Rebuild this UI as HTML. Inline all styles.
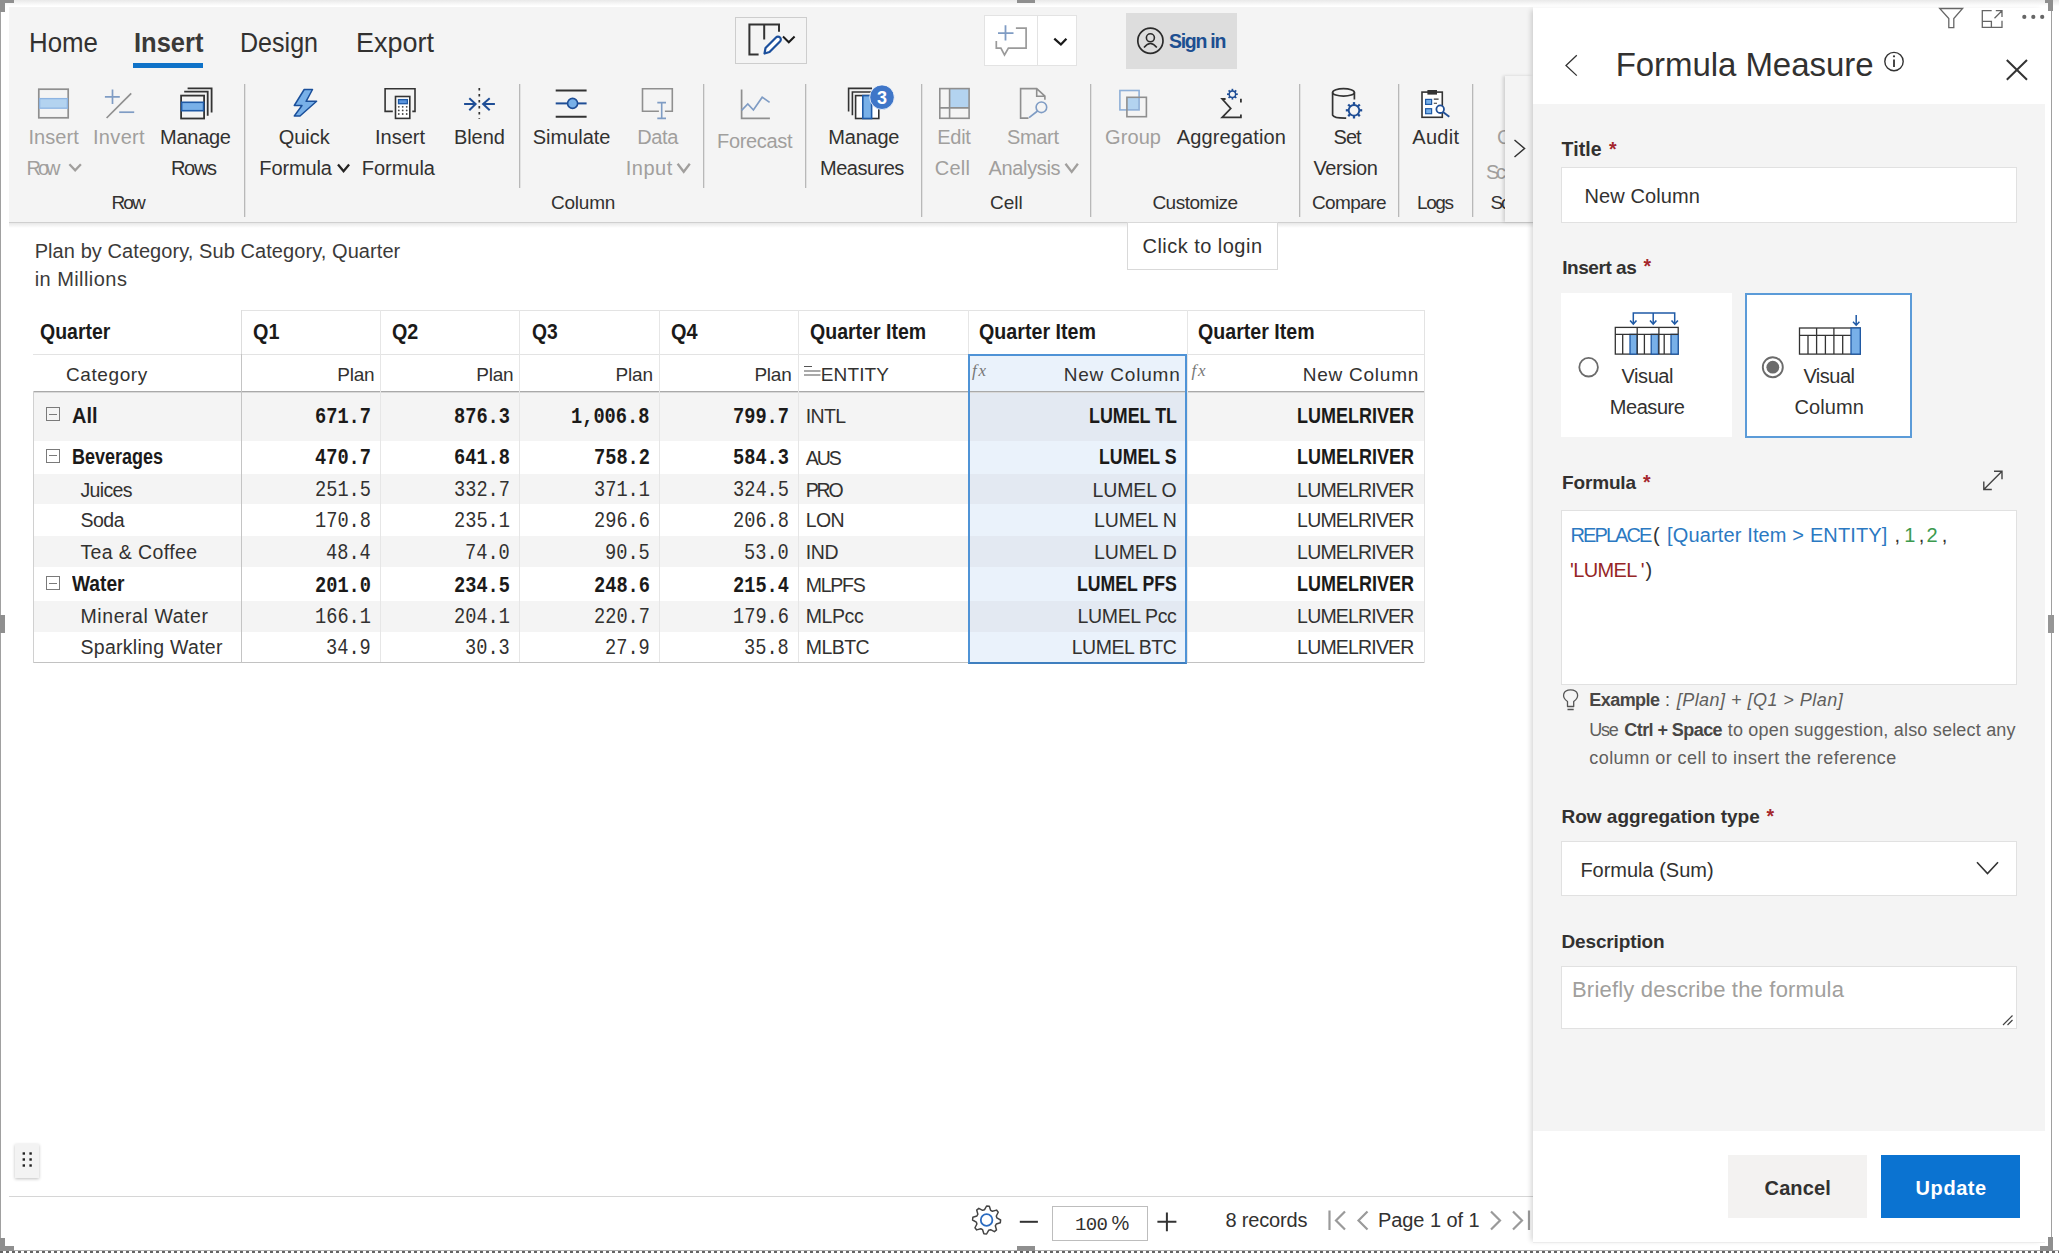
<!DOCTYPE html>
<html><head><meta charset="utf-8"><title>Formula Measure</title>
<style>
html,body{margin:0;padding:0;}
body{width:2059px;height:1253px;position:relative;overflow:hidden;background:#fff;font-family:"Liberation Sans",sans-serif;}
.t{position:absolute;white-space:nowrap;}
.b{position:absolute;box-sizing:border-box;}
</style></head><body>
<div class="b" style="left:0px;top:0px;width:2059px;height:6px;background:linear-gradient(#e9e9e9,#ffffff);"></div>
<div class="b" style="left:0px;top:0px;width:1px;height:1253px;background:#a0a0a0;"></div>
<div class="b" style="left:2051px;top:0px;width:1px;height:1253px;background:#a0a0a0;"></div>
<div class="b" style="left:0px;top:1250px;width:2059px;height:1px;background:#b0b0b0;"></div>
<div class="b" style="left:0px;top:1251px;width:2059px;height:2px;background:repeating-linear-gradient(90deg,#666 0 3px,#fff 3px 6px);"></div>
<div class="b" style="left:0px;top:0px;width:14px;height:3px;background:#8f8f8f;"></div>
<div class="b" style="left:0px;top:0px;width:5px;height:12px;background:#8f8f8f;"></div>
<div class="b" style="left:0px;top:1238px;width:5px;height:13px;background:#8f8f8f;"></div>
<div class="b" style="left:0px;top:1246px;width:14px;height:5px;background:#8f8f8f;"></div>
<div class="b" style="left:2040px;top:1246px;width:13px;height:5px;background:#8f8f8f;"></div>
<div class="b" style="left:2048px;top:1237px;width:5px;height:14px;background:#8f8f8f;"></div>
<div class="b" style="left:2045px;top:0px;width:8px;height:3px;background:#8f8f8f;"></div>
<div class="b" style="left:2048px;top:0px;width:5px;height:11px;background:#8f8f8f;"></div>
<div class="b" style="left:1017px;top:0px;width:18px;height:3px;background:#8f8f8f;"></div>
<div class="b" style="left:1017px;top:1246px;width:18px;height:5px;background:#8f8f8f;"></div>
<div class="b" style="left:0px;top:615px;width:5px;height:18px;background:#8f8f8f;"></div>
<div class="b" style="left:2048px;top:615px;width:6px;height:18px;background:#969696;"></div>
<div class="b" style="left:9px;top:7px;width:1524px;height:215px;background:#f4f4f4;"></div>
<div class="b" style="left:9px;top:222px;width:1524px;height:1px;background:#cfcfcf;"></div>
<div class="b" style="left:9px;top:223px;width:1524px;height:5px;background:linear-gradient(rgba(0,0,0,0.09),rgba(0,0,0,0));"></div>
<div class="t" style="left:28.70px;top:29.29px;font-size:28px;line-height:28px;font-family:'Liberation Sans', sans-serif;font-weight:normal;font-style:normal;letter-spacing:0.000px;color:#323130;transform:scaleX(0.9238);transform-origin:0 0;">Home</div>
<div class="t" style="left:133.50px;top:29.29px;font-size:28px;line-height:28px;font-family:'Liberation Sans', sans-serif;font-weight:bold;font-style:normal;letter-spacing:0.000px;color:#3a3938;transform:scaleX(0.9115);transform-origin:0 0;">Insert</div>
<div class="t" style="left:239.80px;top:29.29px;font-size:28px;line-height:28px;font-family:'Liberation Sans', sans-serif;font-weight:normal;font-style:normal;letter-spacing:0.000px;color:#323130;transform:scaleX(0.8949);transform-origin:0 0;">Design</div>
<div class="t" style="left:356.40px;top:29.29px;font-size:28px;line-height:28px;font-family:'Liberation Sans', sans-serif;font-weight:normal;font-style:normal;letter-spacing:0.000px;color:#323130;transform:scaleX(0.9639);transform-origin:0 0;">Export</div>
<div class="b" style="left:133px;top:63px;width:70px;height:4.5px;background:#0f72c8;"></div>
<div class="b" style="left:735px;top:17px;width:72px;height:47px;border:1px solid #cdcdcd;"></div>
<div class="b" style="left:984px;top:15px;width:93px;height:51px;background:#fff;border:1px solid #e3e3e3;"></div>
<div class="b" style="left:1037px;top:16px;width:1px;height:49px;background:#e3e3e3;"></div>
<div class="b" style="left:1126px;top:13px;width:111px;height:56px;background:#dddddd;"></div>
<div class="t" style="left:1168.90px;top:31.99px;font-size:19.5px;line-height:19.5px;font-family:'Liberation Sans', sans-serif;font-weight:bold;font-style:normal;letter-spacing:-1.248px;color:#1d4f91;">Sign in</div>
<div class="b" style="left:244px;top:84px;width:1px;height:133px;background:#b8b8b8;"></div>
<div class="b" style="left:245px;top:84px;width:1px;height:133px;background:#e2e2e2;"></div>
<div class="b" style="left:519px;top:84px;width:1px;height:104px;background:#b8b8b8;"></div>
<div class="b" style="left:520px;top:84px;width:1px;height:104px;background:#e2e2e2;"></div>
<div class="b" style="left:703px;top:84px;width:1px;height:104px;background:#b8b8b8;"></div>
<div class="b" style="left:704px;top:84px;width:1px;height:104px;background:#e2e2e2;"></div>
<div class="b" style="left:805px;top:84px;width:1px;height:104px;background:#b8b8b8;"></div>
<div class="b" style="left:806px;top:84px;width:1px;height:104px;background:#e2e2e2;"></div>
<div class="b" style="left:921px;top:84px;width:1px;height:133px;background:#b8b8b8;"></div>
<div class="b" style="left:922px;top:84px;width:1px;height:133px;background:#e2e2e2;"></div>
<div class="b" style="left:1090px;top:84px;width:1px;height:133px;background:#b8b8b8;"></div>
<div class="b" style="left:1091px;top:84px;width:1px;height:133px;background:#e2e2e2;"></div>
<div class="b" style="left:1299px;top:84px;width:1px;height:133px;background:#b8b8b8;"></div>
<div class="b" style="left:1300px;top:84px;width:1px;height:133px;background:#e2e2e2;"></div>
<div class="b" style="left:1398px;top:84px;width:1px;height:133px;background:#b8b8b8;"></div>
<div class="b" style="left:1399px;top:84px;width:1px;height:133px;background:#e2e2e2;"></div>
<div class="b" style="left:1472px;top:84px;width:1px;height:133px;background:#b8b8b8;"></div>
<div class="b" style="left:1473px;top:84px;width:1px;height:133px;background:#e2e2e2;"></div>
<div class="t" style="left:28.40px;top:127.27px;font-size:20px;line-height:20px;font-family:'Liberation Sans', sans-serif;font-weight:normal;font-style:normal;letter-spacing:0.056px;color:#a19f9d;">Insert</div>
<div class="t" style="left:26.50px;top:158.07px;font-size:20px;line-height:20px;font-family:'Liberation Sans', sans-serif;font-weight:normal;font-style:normal;letter-spacing:-3.005px;color:#a19f9d;">Row</div>
<div class="t" style="left:93.00px;top:127.27px;font-size:20px;line-height:20px;font-family:'Liberation Sans', sans-serif;font-weight:normal;font-style:normal;letter-spacing:0.316px;color:#a19f9d;">Invert</div>
<div class="t" style="left:160.00px;top:127.27px;font-size:20px;line-height:20px;font-family:'Liberation Sans', sans-serif;font-weight:normal;font-style:normal;letter-spacing:-0.256px;color:#323130;">Manage</div>
<div class="t" style="left:171.00px;top:158.07px;font-size:20px;line-height:20px;font-family:'Liberation Sans', sans-serif;font-weight:normal;font-style:normal;letter-spacing:-1.337px;color:#323130;">Rows</div>
<div class="t" style="left:278.70px;top:127.27px;font-size:20px;line-height:20px;font-family:'Liberation Sans', sans-serif;font-weight:normal;font-style:normal;letter-spacing:-0.031px;color:#323130;">Quick</div>
<div class="t" style="left:259.30px;top:158.07px;font-size:20px;line-height:20px;font-family:'Liberation Sans', sans-serif;font-weight:normal;font-style:normal;letter-spacing:-0.109px;color:#323130;">Formula</div>
<div class="t" style="left:375.00px;top:127.27px;font-size:20px;line-height:20px;font-family:'Liberation Sans', sans-serif;font-weight:normal;font-style:normal;letter-spacing:-0.004px;color:#323130;">Insert</div>
<div class="t" style="left:361.80px;top:158.07px;font-size:20px;line-height:20px;font-family:'Liberation Sans', sans-serif;font-weight:normal;font-style:normal;letter-spacing:-0.026px;color:#323130;">Formula</div>
<div class="t" style="left:454.00px;top:127.27px;font-size:20px;line-height:20px;font-family:'Liberation Sans', sans-serif;font-weight:normal;font-style:normal;letter-spacing:-0.089px;color:#323130;">Blend</div>
<div class="t" style="left:532.80px;top:127.27px;font-size:20px;line-height:20px;font-family:'Liberation Sans', sans-serif;font-weight:normal;font-style:normal;letter-spacing:-0.017px;color:#323130;">Simulate</div>
<div class="t" style="left:637.20px;top:127.27px;font-size:20px;line-height:20px;font-family:'Liberation Sans', sans-serif;font-weight:normal;font-style:normal;letter-spacing:-0.316px;color:#a19f9d;">Data</div>
<div class="t" style="left:625.80px;top:158.07px;font-size:20px;line-height:20px;font-family:'Liberation Sans', sans-serif;font-weight:normal;font-style:normal;letter-spacing:0.504px;color:#a19f9d;">Input</div>
<div class="t" style="left:717.00px;top:131.07px;font-size:20px;line-height:20px;font-family:'Liberation Sans', sans-serif;font-weight:normal;font-style:normal;letter-spacing:-0.315px;color:#a19f9d;">Forecast</div>
<div class="t" style="left:828.30px;top:127.27px;font-size:20px;line-height:20px;font-family:'Liberation Sans', sans-serif;font-weight:normal;font-style:normal;letter-spacing:-0.216px;color:#323130;">Manage</div>
<div class="t" style="left:820.00px;top:158.07px;font-size:20px;line-height:20px;font-family:'Liberation Sans', sans-serif;font-weight:normal;font-style:normal;letter-spacing:-0.502px;color:#323130;">Measures</div>
<div class="t" style="left:937.30px;top:127.27px;font-size:20px;line-height:20px;font-family:'Liberation Sans', sans-serif;font-weight:normal;font-style:normal;letter-spacing:-0.288px;color:#a19f9d;">Edit</div>
<div class="t" style="left:934.80px;top:158.07px;font-size:20px;line-height:20px;font-family:'Liberation Sans', sans-serif;font-weight:normal;font-style:normal;letter-spacing:0.248px;color:#a19f9d;">Cell</div>
<div class="t" style="left:1007.00px;top:127.27px;font-size:20px;line-height:20px;font-family:'Liberation Sans', sans-serif;font-weight:normal;font-style:normal;letter-spacing:-0.336px;color:#a19f9d;">Smart</div>
<div class="t" style="left:988.60px;top:158.07px;font-size:20px;line-height:20px;font-family:'Liberation Sans', sans-serif;font-weight:normal;font-style:normal;letter-spacing:-0.354px;color:#a19f9d;">Analysis</div>
<div class="t" style="left:1105.00px;top:127.27px;font-size:20px;line-height:20px;font-family:'Liberation Sans', sans-serif;font-weight:normal;font-style:normal;letter-spacing:0.103px;color:#a19f9d;">Group</div>
<div class="t" style="left:1176.70px;top:127.27px;font-size:20px;line-height:20px;font-family:'Liberation Sans', sans-serif;font-weight:normal;font-style:normal;letter-spacing:0.143px;color:#323130;">Aggregation</div>
<div class="t" style="left:1333.60px;top:127.27px;font-size:20px;line-height:20px;font-family:'Liberation Sans', sans-serif;font-weight:normal;font-style:normal;letter-spacing:-1.010px;color:#323130;">Set</div>
<div class="t" style="left:1313.40px;top:158.07px;font-size:20px;line-height:20px;font-family:'Liberation Sans', sans-serif;font-weight:normal;font-style:normal;letter-spacing:-0.352px;color:#323130;">Version</div>
<div class="t" style="left:1412.30px;top:127.27px;font-size:20px;line-height:20px;font-family:'Liberation Sans', sans-serif;font-weight:normal;font-style:normal;letter-spacing:0.278px;color:#323130;">Audit</div>
<div class="t" style="left:1497.00px;top:127.27px;font-size:20px;line-height:20px;font-family:'Liberation Sans', sans-serif;font-weight:normal;font-style:normal;letter-spacing:0.000px;color:#a19f9d;">C</div>
<div class="t" style="left:1486.00px;top:161.57px;font-size:20px;line-height:20px;font-family:'Liberation Sans', sans-serif;font-weight:normal;font-style:normal;letter-spacing:-3.341px;color:#a19f9d;">Sc</div>
<div class="t" style="left:111.60px;top:192.51px;font-size:19px;line-height:19px;font-family:'Liberation Sans', sans-serif;font-weight:normal;font-style:normal;letter-spacing:-1.955px;color:#323130;">Row</div>
<div class="t" style="left:551.00px;top:192.51px;font-size:19px;line-height:19px;font-family:'Liberation Sans', sans-serif;font-weight:normal;font-style:normal;letter-spacing:-0.234px;color:#323130;">Column</div>
<div class="t" style="left:990.00px;top:192.51px;font-size:19px;line-height:19px;font-family:'Liberation Sans', sans-serif;font-weight:normal;font-style:normal;letter-spacing:0.022px;color:#323130;">Cell</div>
<div class="t" style="left:1152.40px;top:192.51px;font-size:19px;line-height:19px;font-family:'Liberation Sans', sans-serif;font-weight:normal;font-style:normal;letter-spacing:-0.494px;color:#323130;">Customize</div>
<div class="t" style="left:1311.90px;top:192.51px;font-size:19px;line-height:19px;font-family:'Liberation Sans', sans-serif;font-weight:normal;font-style:normal;letter-spacing:-0.591px;color:#323130;">Compare</div>
<div class="t" style="left:1417.00px;top:192.51px;font-size:19px;line-height:19px;font-family:'Liberation Sans', sans-serif;font-weight:normal;font-style:normal;letter-spacing:-1.401px;color:#323130;">Logs</div>
<div class="t" style="left:1490.60px;top:192.51px;font-size:19px;line-height:19px;font-family:'Liberation Sans', sans-serif;font-weight:normal;font-style:normal;letter-spacing:-2.173px;color:#323130;">Sc</div>
<div class="b" style="left:1505px;top:76px;width:28px;height:146px;background:#f4f4f4;box-shadow:-2px 0 3px rgba(0,0,0,0.15);"></div>
<div class="b" style="left:1127px;top:222px;width:151px;height:48px;background:#fff;border:1px solid #d9d9d9;"></div>
<div class="t" style="left:1142.50px;top:236.37px;font-size:20px;line-height:20px;font-family:'Liberation Sans', sans-serif;font-weight:normal;font-style:normal;letter-spacing:0.471px;color:#323130;">Click to login</div>
<svg class="b" style="left:0;top:0" width="1540" height="240" viewBox="0 0 1540 240" fill="none"><path d="M758.6 54.5 H749.4 V24.6 H779 V31.8 M764.2 24.6 V39.6" stroke="#333333" stroke-width="2" fill="none" /><path d="M764.5 53.5 L765.5 48 L776 37.5 A2.5 2.5 0 0 1 780 41.5 L769.5 52 Z" stroke="#1b4f9c" stroke-width="2.2" fill="#fff" stroke-linejoin="round"/><path d="M783 36.5 L788.8 42.3 L794.6 36.5" stroke="#1a1a1a" stroke-width="2" fill="none" /><path d="M1005.5 25.3 V40.6 M998 33.1 H1013.5" stroke="#7f9cc4" stroke-width="1.8" fill="none" /><path d="M1015.9 28.2 H1026.1 V48.1 H1008.4 L1004.5 54.9 L1000.9 48.1 H996.3 V41.1" stroke="#9a9a9a" stroke-width="1.7" fill="none" /><path d="M1054.3 38.7 L1060.9 44.5 L1066.4 38.7" stroke="#1a1a1a" stroke-width="2.3" fill="none" /><circle cx="1150.4" cy="40.7" r="12.6" stroke="#2b2b2b" stroke-width="1.7"/><circle cx="1150.4" cy="37.8" r="4" stroke="#2b2b2b" stroke-width="1.6"/><path d="M1144 47.4 Q1150.4 39.5 1156.8 47.4" stroke="#2b2b2b" stroke-width="1.6" fill="none" /><rect x="38.8" y="89.2" width="29.4" height="28.6" stroke="#8f8f8f" stroke-width="1.7" fill="none"/><rect x="39.6" y="98.6" width="27.8" height="9.6" fill="#b3d3f0" stroke="#8db4e2" stroke-width="1.3"/><path d="M112.5 89.5 V104 M104.9 96.8 H119.8" stroke="#7f9cc4" stroke-width="1.7" fill="none" /><path d="M106.6 118 L131.2 93.4" stroke="#8f8f8f" stroke-width="1.7" fill="none" /><path d="M119.2 112.2 H134.2" stroke="#7f9cc4" stroke-width="1.7" fill="none" /><path d="M187.6 88.4 H211.6 V112.4" stroke="#333333" stroke-width="1.8" fill="none" /><path d="M184.2 91.7 H207.7 V115.8" stroke="#333333" stroke-width="1.8" fill="none" /><rect x="181.1" y="95.6" width="23" height="22.9" stroke="#333333" stroke-width="1.8" fill="none"/><rect x="181.6" y="102.3" width="22" height="8.4" fill="#78b0e8" stroke="#1f5aa6" stroke-width="1.6"/><path d="M304.2 89.5 H312.5 L306.1 101.3 H316.6 L300 116 H294.3 L302 105.5 H294.3 Z" stroke="#1a4f9a" stroke-width="1.5" fill="#78b0e8" stroke-linejoin="round"/><path d="M392.8 111.4 H385.1 V88.7 H415 V111.4 H412.3" stroke="#333333" stroke-width="1.6" fill="none" /><rect x="395.5" y="96.5" width="14.3" height="21.9" stroke="#333333" stroke-width="1.6" fill="#fff"/><rect x="398.5" y="99.6" width="8.9" height="4.1" fill="#5a94dd" stroke="#1f5aa6" stroke-width="1.3"/><circle cx="398.8" cy="106.8" r="0.9" fill="#444"/><circle cx="398.8" cy="110.4" r="0.9" fill="#444"/><circle cx="398.8" cy="114" r="0.9" fill="#444"/><circle cx="402.7" cy="106.8" r="0.9" fill="#444"/><circle cx="402.7" cy="110.4" r="0.9" fill="#444"/><circle cx="402.7" cy="114" r="0.9" fill="#444"/><circle cx="406.7" cy="106.8" r="0.9" fill="#444"/><circle cx="406.7" cy="110.4" r="0.9" fill="#444"/><circle cx="406.7" cy="114" r="0.9" fill="#444"/><path d="M479.3 88 V118.7" stroke="#333333" stroke-width="1.7" fill="none" stroke-dasharray="2.5 3.5"/><path d="M464.1 104 H475.6 M469.3 98.3 L475.6 104 L469.3 110.3" stroke="#1f4e96" stroke-width="2" fill="none" /><path d="M494.9 104 H483.1 M489.7 98.3 L483.1 104 L489.7 110.3" stroke="#1f4e96" stroke-width="2" fill="none" /><path d="M555.7 90.6 H586.6 M555.7 116.8 H586.6" stroke="#333333" stroke-width="2" fill="none" /><path d="M555.7 103.4 H586.6" stroke="#1f4e96" stroke-width="2" fill="none" /><circle cx="572.6" cy="103.4" r="5" fill="#78b0e8" stroke="#1f4e96" stroke-width="1.6"/><path d="M658.9 111.3 H642.5 V88.7 H672.3 V111.3 H664.9" stroke="#8f8f8f" stroke-width="1.6" fill="none" /><path d="M661.7 102.6 V118.4 M657.3 102.6 H666 M657.3 118.4 H666" stroke="#7f9cc4" stroke-width="1.6" fill="none" /><path d="M741.6 89.5 V118.3 H769.9" stroke="#8f8f8f" stroke-width="1.7" fill="none" /><path d="M741.6 110.3 L747.8 104 L753.4 110 L762.2 97.2 L769.6 102.4" stroke="#7f9cc4" stroke-width="1.7" fill="none" /><path d="M848.6 111.6 V88.4 H872" stroke="#333333" stroke-width="1.6" fill="none" /><path d="M852.4 115.3 V92 H874" stroke="#333333" stroke-width="1.6" fill="none" /><rect x="855.6" y="95.6" width="23.2" height="22.9" stroke="#333333" stroke-width="1.6" fill="#fff"/><rect x="862.8" y="95.6" width="8.8" height="22.9" fill="#78b0e8" stroke="#1f5aa6" stroke-width="1.6"/><circle cx="882" cy="97.2" r="12.3" fill="#3f76c8" stroke="#fff" stroke-width="0.8"/><text x="882" y="103.8" font-family="Liberation Sans" font-weight="bold" font-size="18" fill="#fff" text-anchor="middle">3</text><rect x="949.6" y="88.6" width="19.5" height="19.3" fill="#b3d3f0"/><rect x="939.8" y="88.6" width="29.3" height="29.7" stroke="#8f8f8f" stroke-width="1.6" fill="none"/><path d="M949.6 88.6 V118.3 M939.8 107.9 H969.1" stroke="#8f8f8f" stroke-width="1.6" fill="none" /><path d="M1028.5 118.1 H1020.6 V88.6 H1036.7 L1044.9 96.2 V99.7 M1036.7 88.6 V96.2 H1044.9" stroke="#8f8f8f" stroke-width="1.6" fill="none" /><circle cx="1041.4" cy="107.3" r="5.3" stroke="#7f9cc4" stroke-width="1.6"/><path d="M1037.5 111 L1029.1 117.7" stroke="#7f9cc4" stroke-width="1.7" fill="none" /><rect x="1126.9" y="97.3" width="12.2" height="12.6" fill="#b3d3f0"/><rect x="1119.9" y="90.5" width="19.2" height="19.4" stroke="#8fb0d8" stroke-width="1.6" fill="none"/><rect x="1126.9" y="97.3" width="19.5" height="19.4" stroke="#8f8f8f" stroke-width="1.6" fill="none"/><path d="M1225.6 99 H1222.2 L1230.7 108.5 L1222.2 117.4 H1240.9 V114.5 M1240.9 98.7 V102.4" stroke="#333333" stroke-width="1.8" fill="none" /><circle cx="1232.4" cy="94.2" r="3.2" stroke="#1f4e96" stroke-width="1.4" fill="#f4f4f4"/><line x1="1235.60" y1="94.20" x2="1237.80" y2="94.20" stroke="#1f4e96" stroke-width="1.68"/><line x1="1234.66" y1="96.46" x2="1236.22" y2="98.02" stroke="#1f4e96" stroke-width="1.68"/><line x1="1232.40" y1="97.40" x2="1232.40" y2="99.60" stroke="#1f4e96" stroke-width="1.68"/><line x1="1230.14" y1="96.46" x2="1228.58" y2="98.02" stroke="#1f4e96" stroke-width="1.68"/><line x1="1229.20" y1="94.20" x2="1227.00" y2="94.20" stroke="#1f4e96" stroke-width="1.68"/><line x1="1230.14" y1="91.94" x2="1228.58" y2="90.38" stroke="#1f4e96" stroke-width="1.68"/><line x1="1232.40" y1="91.00" x2="1232.40" y2="88.80" stroke="#1f4e96" stroke-width="1.68"/><line x1="1234.66" y1="91.94" x2="1236.22" y2="90.38" stroke="#1f4e96" stroke-width="1.68"/><path d="M1332.6 92.4 V115.1 Q1334 118.3 1346.2 118.1 M1354.4 92.4 V99.6" stroke="#333333" stroke-width="1.7" fill="none" /><ellipse cx="1343.5" cy="92.4" rx="10.9" ry="3.7" stroke="#333333" stroke-width="1.7"/><circle cx="1354" cy="110.3" r="5.3" stroke="#1f4e96" stroke-width="1.9" fill="#f4f4f4"/><line x1="1359.30" y1="110.30" x2="1362.20" y2="110.30" stroke="#1f4e96" stroke-width="2.28"/><line x1="1357.75" y1="114.05" x2="1359.80" y2="116.10" stroke="#1f4e96" stroke-width="2.28"/><line x1="1354.00" y1="115.60" x2="1354.00" y2="118.50" stroke="#1f4e96" stroke-width="2.28"/><line x1="1350.25" y1="114.05" x2="1348.20" y2="116.10" stroke="#1f4e96" stroke-width="2.28"/><line x1="1348.70" y1="110.30" x2="1345.80" y2="110.30" stroke="#1f4e96" stroke-width="2.28"/><line x1="1350.25" y1="106.55" x2="1348.20" y2="104.50" stroke="#1f4e96" stroke-width="2.28"/><line x1="1354.00" y1="105.00" x2="1354.00" y2="102.10" stroke="#1f4e96" stroke-width="2.28"/><line x1="1357.75" y1="106.55" x2="1359.80" y2="104.50" stroke="#1f4e96" stroke-width="2.28"/><rect x="1422" y="92.1" width="20.3" height="25.2" stroke="#333333" stroke-width="1.6" fill="#fff"/><rect x="1427.4" y="90" width="9.6" height="4.6" fill="#333333"/><rect x="1425.6" y="99.4" width="6" height="5" fill="#78b0e8" stroke="#1f5aa6" stroke-width="1.2"/><rect x="1425.6" y="108.7" width="6" height="5" fill="#78b0e8" stroke="#1f5aa6" stroke-width="1.2"/><path d="M1433.8 99.1 H1438.6 M1433.8 103.2 H1437" stroke="#333333" stroke-width="1.1" fill="none" /><circle cx="1440.2" cy="109.2" r="3.8" stroke="#1f4e96" stroke-width="1.8" fill="#fff"/><path d="M1443 112 L1449.3 116.7" stroke="#1f4e96" stroke-width="1.9" fill="none" /><path d="M69.39999999999999 164.3 L75.15 170.4 L80.9 164.3" stroke="#a19f9d" stroke-width="2.3"/><path d="M338.0 164.5 L343.54999999999995 171.20000000000002 L349.09999999999997 164.5" stroke="#252423" stroke-width="2.3"/><path d="M677.5999999999999 163.7 L683.7 171.8 L689.8000000000001 163.7" stroke="#a19f9d" stroke-width="2.3"/><path d="M1065.5 163.7 L1071.7 171.9 L1077.9 163.7" stroke="#a19f9d" stroke-width="2.3"/><path d="M1514.5 140 L1524.5 148.5 L1514.5 157" stroke="#333" stroke-width="1.5" fill="none" /></svg>
<div class="t" style="left:34.70px;top:240.77px;font-size:20px;line-height:20px;font-family:'Liberation Sans', sans-serif;font-weight:normal;font-style:normal;letter-spacing:0.074px;color:#3b3a39;">Plan by Category, Sub Category, Quarter</div>
<div class="t" style="left:34.70px;top:269.07px;font-size:20px;line-height:20px;font-family:'Liberation Sans', sans-serif;font-weight:normal;font-style:normal;letter-spacing:0.439px;color:#3b3a39;">in Millions</div>
<div class="b" style="left:34px;top:392px;width:1390px;height:49px;background:#f4f4f4;"></div>
<div class="b" style="left:968px;top:392px;width:219px;height:49px;background:#e3e9f2;"></div>
<div class="b" style="left:34px;top:441px;width:1390px;height:33px;background:#ffffff;"></div>
<div class="b" style="left:968px;top:441px;width:219px;height:33px;background:#eaf2fb;"></div>
<div class="b" style="left:34px;top:474px;width:1390px;height:30px;background:#f4f4f4;"></div>
<div class="b" style="left:968px;top:474px;width:219px;height:30px;background:#e3e9f2;"></div>
<div class="b" style="left:34px;top:504px;width:1390px;height:32px;background:#ffffff;"></div>
<div class="b" style="left:968px;top:504px;width:219px;height:32px;background:#eaf2fb;"></div>
<div class="b" style="left:34px;top:536px;width:1390px;height:31px;background:#f4f4f4;"></div>
<div class="b" style="left:968px;top:536px;width:219px;height:31px;background:#e3e9f2;"></div>
<div class="b" style="left:34px;top:567px;width:1390px;height:34px;background:#ffffff;"></div>
<div class="b" style="left:968px;top:567px;width:219px;height:34px;background:#eaf2fb;"></div>
<div class="b" style="left:34px;top:601px;width:1390px;height:31px;background:#f4f4f4;"></div>
<div class="b" style="left:968px;top:601px;width:219px;height:31px;background:#e3e9f2;"></div>
<div class="b" style="left:34px;top:632px;width:1390px;height:30px;background:#ffffff;"></div>
<div class="b" style="left:968px;top:632px;width:219px;height:30px;background:#eaf2fb;"></div>
<div class="b" style="left:968px;top:354px;width:219px;height:38px;background:#eaf2fb;"></div>
<div class="b" style="left:241px;top:310px;width:1184px;height:1px;background:#e3e3e3;"></div>
<div class="b" style="left:33px;top:354px;width:1392px;height:1px;background:#e3e3e3;"></div>
<div class="b" style="left:33px;top:391px;width:1392px;height:1px;background:#a9a9a9;"></div>
<div class="b" style="left:33px;top:392px;width:1392px;height:1px;background:#d9d9d9;"></div>
<div class="b" style="left:33px;top:662px;width:1392px;height:1px;background:#c2c2c2;"></div>
<div class="b" style="left:33px;top:391px;width:1px;height:272px;background:#d0d0d0;"></div>
<div class="b" style="left:1424px;top:310px;width:1px;height:353px;background:#e3e3e3;"></div>
<div class="b" style="left:241px;top:310px;width:1px;height:44px;background:#dddddd;"></div>
<div class="b" style="left:241px;top:354px;width:1px;height:309px;background:#c4c4c4;"></div>
<div class="b" style="left:380px;top:310px;width:1px;height:352px;background:#e6e6e6;"></div>
<div class="b" style="left:519px;top:310px;width:1px;height:352px;background:#e6e6e6;"></div>
<div class="b" style="left:659px;top:310px;width:1px;height:352px;background:#e6e6e6;"></div>
<div class="b" style="left:798px;top:310px;width:1px;height:352px;background:#e6e6e6;"></div>
<div class="b" style="left:968px;top:310px;width:1px;height:352px;background:#e6e6e6;"></div>
<div class="b" style="left:1187px;top:310px;width:1px;height:352px;background:#e6e6e6;"></div>
<div class="b" style="left:968px;top:354px;width:219px;height:310px;border:2px solid #4f93d6;border-bottom-color:#3f7fbf;"></div>
<div class="t" style="left:39.70px;top:320.55px;font-size:22.5px;line-height:22.5px;font-family:'Liberation Sans', sans-serif;font-weight:bold;font-style:normal;letter-spacing:0.000px;color:#1b1a19;transform:scaleX(0.8662);transform-origin:0 0;">Quarter</div>
<div class="t" style="left:253.40px;top:320.55px;font-size:22.5px;line-height:22.5px;font-family:'Liberation Sans', sans-serif;font-weight:bold;font-style:normal;letter-spacing:0.000px;color:#1b1a19;transform:scaleX(0.8795);transform-origin:0 0;">Q1</div>
<div class="t" style="left:392.40px;top:320.55px;font-size:22.5px;line-height:22.5px;font-family:'Liberation Sans', sans-serif;font-weight:bold;font-style:normal;letter-spacing:0.000px;color:#1b1a19;transform:scaleX(0.8762);transform-origin:0 0;">Q2</div>
<div class="t" style="left:531.90px;top:320.55px;font-size:22.5px;line-height:22.5px;font-family:'Liberation Sans', sans-serif;font-weight:bold;font-style:normal;letter-spacing:0.000px;color:#1b1a19;transform:scaleX(0.8562);transform-origin:0 0;">Q3</div>
<div class="t" style="left:670.70px;top:320.55px;font-size:22.5px;line-height:22.5px;font-family:'Liberation Sans', sans-serif;font-weight:bold;font-style:normal;letter-spacing:0.000px;color:#1b1a19;transform:scaleX(0.8862);transform-origin:0 0;">Q4</div>
<div class="t" style="left:810.20px;top:320.55px;font-size:22.5px;line-height:22.5px;font-family:'Liberation Sans', sans-serif;font-weight:bold;font-style:normal;letter-spacing:0.000px;color:#1b1a19;transform:scaleX(0.8685);transform-origin:0 0;">Quarter Item</div>
<div class="t" style="left:978.60px;top:320.55px;font-size:22.5px;line-height:22.5px;font-family:'Liberation Sans', sans-serif;font-weight:bold;font-style:normal;letter-spacing:0.000px;color:#1b1a19;transform:scaleX(0.8745);transform-origin:0 0;">Quarter Item</div>
<div class="t" style="left:1198.10px;top:320.55px;font-size:22.5px;line-height:22.5px;font-family:'Liberation Sans', sans-serif;font-weight:bold;font-style:normal;letter-spacing:0.000px;color:#1b1a19;transform:scaleX(0.8715);transform-origin:0 0;">Quarter Item</div>
<div class="t" style="left:66.00px;top:365.11px;font-size:19px;line-height:19px;font-family:'Liberation Sans', sans-serif;font-weight:normal;font-style:normal;letter-spacing:0.601px;color:#323130;">Category</div>
<div class="t" style="left:337.20px;top:365.11px;font-size:19px;line-height:19px;font-family:'Liberation Sans', sans-serif;font-weight:normal;font-style:normal;letter-spacing:-0.210px;color:#323130;">Plan</div>
<div class="t" style="left:476.20px;top:365.11px;font-size:19px;line-height:19px;font-family:'Liberation Sans', sans-serif;font-weight:normal;font-style:normal;letter-spacing:-0.210px;color:#323130;">Plan</div>
<div class="t" style="left:615.60px;top:365.11px;font-size:19px;line-height:19px;font-family:'Liberation Sans', sans-serif;font-weight:normal;font-style:normal;letter-spacing:-0.210px;color:#323130;">Plan</div>
<div class="t" style="left:754.40px;top:365.11px;font-size:19px;line-height:19px;font-family:'Liberation Sans', sans-serif;font-weight:normal;font-style:normal;letter-spacing:-0.210px;color:#323130;">Plan</div>
<div class="t" style="left:820.80px;top:365.11px;font-size:19px;line-height:19px;font-family:'Liberation Sans', sans-serif;font-weight:normal;font-style:normal;letter-spacing:0.128px;color:#323130;">ENTITY</div>
<div class="t" style="left:1063.70px;top:365.11px;font-size:19px;line-height:19px;font-family:'Liberation Sans', sans-serif;font-weight:normal;font-style:normal;letter-spacing:0.815px;color:#323130;">New Column</div>
<div class="t" style="left:1302.80px;top:365.11px;font-size:19px;line-height:19px;font-family:'Liberation Sans', sans-serif;font-weight:normal;font-style:normal;letter-spacing:0.749px;color:#323130;">New Column</div>
<div class="t" style="left:71.80px;top:404.55px;font-size:22.5px;line-height:22.5px;font-family:'Liberation Sans', sans-serif;font-weight:bold;font-style:normal;letter-spacing:0.000px;color:#1b1a19;transform:scaleX(0.8869);transform-origin:0 0;">All</div>
<div class="b" style="left:46px;top:407.1px;width:14px;height:14.0px;border:1px solid #7a7a7a;background:transparent;"></div>
<div class="b" style="left:49px;top:413.6px;width:8px;height:1.0px;background:#7a7a7a;"></div>
<div class="t" style="left:314.70px;top:406.75px;font-size:22px;line-height:22px;font-family:'Liberation Mono', monospace;font-weight:bold;font-style:normal;letter-spacing:0.000px;color:#1b1a19;transform:scaleX(0.8484);transform-origin:0 0;">671.7</div>
<div class="t" style="left:453.50px;top:406.75px;font-size:22px;line-height:22px;font-family:'Liberation Mono', monospace;font-weight:bold;font-style:normal;letter-spacing:0.000px;color:#1b1a19;transform:scaleX(0.8484);transform-origin:0 0;">876.3</div>
<div class="t" style="left:571.40px;top:406.75px;font-size:22px;line-height:22px;font-family:'Liberation Mono', monospace;font-weight:bold;font-style:normal;letter-spacing:0.000px;color:#1b1a19;transform:scaleX(0.8484);transform-origin:0 0;">1,006.8</div>
<div class="t" style="left:732.60px;top:406.75px;font-size:22px;line-height:22px;font-family:'Liberation Mono', monospace;font-weight:bold;font-style:normal;letter-spacing:0.000px;color:#1b1a19;transform:scaleX(0.8484);transform-origin:0 0;">799.7</div>
<div class="t" style="left:805.70px;top:407.29px;font-size:19.5px;line-height:19.5px;font-family:'Liberation Sans', sans-serif;font-weight:normal;font-style:normal;letter-spacing:-0.652px;color:#323130;">INTL</div>
<div class="t" style="left:1088.80px;top:404.55px;font-size:22.5px;line-height:22.5px;font-family:'Liberation Sans', sans-serif;font-weight:bold;font-style:normal;letter-spacing:0.000px;color:#1b1a19;transform:scaleX(0.7941);transform-origin:0 0;">LUMEL TL</div>
<div class="t" style="left:1297.40px;top:404.55px;font-size:22.5px;line-height:22.5px;font-family:'Liberation Sans', sans-serif;font-weight:bold;font-style:normal;letter-spacing:0.000px;color:#1b1a19;transform:scaleX(0.8000);transform-origin:0 0;">LUMELRIVER</div>
<div class="t" style="left:71.80px;top:445.95px;font-size:22.5px;line-height:22.5px;font-family:'Liberation Sans', sans-serif;font-weight:bold;font-style:normal;letter-spacing:0.000px;color:#1b1a19;transform:scaleX(0.7994);transform-origin:0 0;">Beverages</div>
<div class="b" style="left:46px;top:448.5px;width:14px;height:14.0px;border:1px solid #7a7a7a;background:transparent;"></div>
<div class="b" style="left:49px;top:455.0px;width:8px;height:1.0px;background:#7a7a7a;"></div>
<div class="t" style="left:314.70px;top:448.15px;font-size:22px;line-height:22px;font-family:'Liberation Mono', monospace;font-weight:bold;font-style:normal;letter-spacing:0.000px;color:#1b1a19;transform:scaleX(0.8484);transform-origin:0 0;">470.7</div>
<div class="t" style="left:453.50px;top:448.15px;font-size:22px;line-height:22px;font-family:'Liberation Mono', monospace;font-weight:bold;font-style:normal;letter-spacing:0.000px;color:#1b1a19;transform:scaleX(0.8484);transform-origin:0 0;">641.8</div>
<div class="t" style="left:593.80px;top:448.15px;font-size:22px;line-height:22px;font-family:'Liberation Mono', monospace;font-weight:bold;font-style:normal;letter-spacing:0.000px;color:#1b1a19;transform:scaleX(0.8484);transform-origin:0 0;">758.2</div>
<div class="t" style="left:732.60px;top:448.15px;font-size:22px;line-height:22px;font-family:'Liberation Mono', monospace;font-weight:bold;font-style:normal;letter-spacing:0.000px;color:#1b1a19;transform:scaleX(0.8484);transform-origin:0 0;">584.3</div>
<div class="t" style="left:805.70px;top:448.69px;font-size:19.5px;line-height:19.5px;font-family:'Liberation Sans', sans-serif;font-weight:normal;font-style:normal;letter-spacing:-2.048px;color:#323130;">AUS</div>
<div class="t" style="left:1099.10px;top:445.95px;font-size:22.5px;line-height:22.5px;font-family:'Liberation Sans', sans-serif;font-weight:bold;font-style:normal;letter-spacing:0.000px;color:#1b1a19;transform:scaleX(0.7901);transform-origin:0 0;">LUMEL S</div>
<div class="t" style="left:1297.40px;top:445.95px;font-size:22.5px;line-height:22.5px;font-family:'Liberation Sans', sans-serif;font-weight:bold;font-style:normal;letter-spacing:0.000px;color:#1b1a19;transform:scaleX(0.8000);transform-origin:0 0;">LUMELRIVER</div>
<div class="t" style="left:80.50px;top:480.59px;font-size:19.5px;line-height:19.5px;font-family:'Liberation Sans', sans-serif;font-weight:normal;font-style:normal;letter-spacing:-0.655px;color:#323130;">Juices</div>
<div class="t" style="left:314.70px;top:480.43px;font-size:21.5px;line-height:21.5px;font-family:'Liberation Mono', monospace;font-weight:normal;font-style:normal;letter-spacing:0.000px;color:#323130;transform:scaleX(0.8681);transform-origin:0 0;">251.5</div>
<div class="t" style="left:453.50px;top:480.43px;font-size:21.5px;line-height:21.5px;font-family:'Liberation Mono', monospace;font-weight:normal;font-style:normal;letter-spacing:0.000px;color:#323130;transform:scaleX(0.8681);transform-origin:0 0;">332.7</div>
<div class="t" style="left:593.80px;top:480.43px;font-size:21.5px;line-height:21.5px;font-family:'Liberation Mono', monospace;font-weight:normal;font-style:normal;letter-spacing:0.000px;color:#323130;transform:scaleX(0.8681);transform-origin:0 0;">371.1</div>
<div class="t" style="left:732.60px;top:480.43px;font-size:21.5px;line-height:21.5px;font-family:'Liberation Mono', monospace;font-weight:normal;font-style:normal;letter-spacing:0.000px;color:#323130;transform:scaleX(0.8681);transform-origin:0 0;">324.5</div>
<div class="t" style="left:805.70px;top:480.59px;font-size:19.5px;line-height:19.5px;font-family:'Liberation Sans', sans-serif;font-weight:normal;font-style:normal;letter-spacing:-2.128px;color:#323130;">PRO</div>
<div class="t" style="left:1092.40px;top:480.59px;font-size:19.5px;line-height:19.5px;font-family:'Liberation Sans', sans-serif;font-weight:normal;font-style:normal;letter-spacing:-0.081px;color:#323130;">LUMEL O</div>
<div class="t" style="left:1297.10px;top:480.59px;font-size:19.5px;line-height:19.5px;font-family:'Liberation Sans', sans-serif;font-weight:normal;font-style:normal;letter-spacing:-0.813px;color:#323130;">LUMELRIVER</div>
<div class="t" style="left:80.50px;top:511.49px;font-size:19.5px;line-height:19.5px;font-family:'Liberation Sans', sans-serif;font-weight:normal;font-style:normal;letter-spacing:-0.514px;color:#323130;">Soda</div>
<div class="t" style="left:314.70px;top:511.33px;font-size:21.5px;line-height:21.5px;font-family:'Liberation Mono', monospace;font-weight:normal;font-style:normal;letter-spacing:0.000px;color:#323130;transform:scaleX(0.8681);transform-origin:0 0;">170.8</div>
<div class="t" style="left:453.50px;top:511.33px;font-size:21.5px;line-height:21.5px;font-family:'Liberation Mono', monospace;font-weight:normal;font-style:normal;letter-spacing:0.000px;color:#323130;transform:scaleX(0.8681);transform-origin:0 0;">235.1</div>
<div class="t" style="left:593.80px;top:511.33px;font-size:21.5px;line-height:21.5px;font-family:'Liberation Mono', monospace;font-weight:normal;font-style:normal;letter-spacing:0.000px;color:#323130;transform:scaleX(0.8681);transform-origin:0 0;">296.6</div>
<div class="t" style="left:732.60px;top:511.33px;font-size:21.5px;line-height:21.5px;font-family:'Liberation Mono', monospace;font-weight:normal;font-style:normal;letter-spacing:0.000px;color:#323130;transform:scaleX(0.8681);transform-origin:0 0;">206.8</div>
<div class="t" style="left:805.70px;top:511.49px;font-size:19.5px;line-height:19.5px;font-family:'Liberation Sans', sans-serif;font-weight:normal;font-style:normal;letter-spacing:-0.548px;color:#323130;">LON</div>
<div class="t" style="left:1094.10px;top:511.49px;font-size:19.5px;line-height:19.5px;font-family:'Liberation Sans', sans-serif;font-weight:normal;font-style:normal;letter-spacing:-0.183px;color:#323130;">LUMEL N</div>
<div class="t" style="left:1297.10px;top:511.49px;font-size:19.5px;line-height:19.5px;font-family:'Liberation Sans', sans-serif;font-weight:normal;font-style:normal;letter-spacing:-0.813px;color:#323130;">LUMELRIVER</div>
<div class="t" style="left:80.50px;top:542.69px;font-size:19.5px;line-height:19.5px;font-family:'Liberation Sans', sans-serif;font-weight:normal;font-style:normal;letter-spacing:0.374px;color:#323130;">Tea &amp; Coffee</div>
<div class="t" style="left:325.90px;top:542.53px;font-size:21.5px;line-height:21.5px;font-family:'Liberation Mono', monospace;font-weight:normal;font-style:normal;letter-spacing:0.000px;color:#323130;transform:scaleX(0.8681);transform-origin:0 0;">48.4</div>
<div class="t" style="left:464.70px;top:542.53px;font-size:21.5px;line-height:21.5px;font-family:'Liberation Mono', monospace;font-weight:normal;font-style:normal;letter-spacing:0.000px;color:#323130;transform:scaleX(0.8681);transform-origin:0 0;">74.0</div>
<div class="t" style="left:605.00px;top:542.53px;font-size:21.5px;line-height:21.5px;font-family:'Liberation Mono', monospace;font-weight:normal;font-style:normal;letter-spacing:0.000px;color:#323130;transform:scaleX(0.8681);transform-origin:0 0;">90.5</div>
<div class="t" style="left:743.80px;top:542.53px;font-size:21.5px;line-height:21.5px;font-family:'Liberation Mono', monospace;font-weight:normal;font-style:normal;letter-spacing:0.000px;color:#323130;transform:scaleX(0.8681);transform-origin:0 0;">53.0</div>
<div class="t" style="left:805.70px;top:542.69px;font-size:19.5px;line-height:19.5px;font-family:'Liberation Sans', sans-serif;font-weight:normal;font-style:normal;letter-spacing:-0.291px;color:#323130;">IND</div>
<div class="t" style="left:1094.10px;top:542.69px;font-size:19.5px;line-height:19.5px;font-family:'Liberation Sans', sans-serif;font-weight:normal;font-style:normal;letter-spacing:-0.183px;color:#323130;">LUMEL D</div>
<div class="t" style="left:1297.10px;top:542.69px;font-size:19.5px;line-height:19.5px;font-family:'Liberation Sans', sans-serif;font-weight:normal;font-style:normal;letter-spacing:-0.813px;color:#323130;">LUMELRIVER</div>
<div class="t" style="left:71.80px;top:573.45px;font-size:22.5px;line-height:22.5px;font-family:'Liberation Sans', sans-serif;font-weight:bold;font-style:normal;letter-spacing:0.000px;color:#1b1a19;transform:scaleX(0.8512);transform-origin:0 0;">Water</div>
<div class="b" style="left:46px;top:576.0px;width:14px;height:14.0px;border:1px solid #7a7a7a;background:transparent;"></div>
<div class="b" style="left:49px;top:582.5px;width:8px;height:1.0px;background:#7a7a7a;"></div>
<div class="t" style="left:314.70px;top:575.65px;font-size:22px;line-height:22px;font-family:'Liberation Mono', monospace;font-weight:bold;font-style:normal;letter-spacing:0.000px;color:#1b1a19;transform:scaleX(0.8484);transform-origin:0 0;">201.0</div>
<div class="t" style="left:453.50px;top:575.65px;font-size:22px;line-height:22px;font-family:'Liberation Mono', monospace;font-weight:bold;font-style:normal;letter-spacing:0.000px;color:#1b1a19;transform:scaleX(0.8484);transform-origin:0 0;">234.5</div>
<div class="t" style="left:593.80px;top:575.65px;font-size:22px;line-height:22px;font-family:'Liberation Mono', monospace;font-weight:bold;font-style:normal;letter-spacing:0.000px;color:#1b1a19;transform:scaleX(0.8484);transform-origin:0 0;">248.6</div>
<div class="t" style="left:732.60px;top:575.65px;font-size:22px;line-height:22px;font-family:'Liberation Mono', monospace;font-weight:bold;font-style:normal;letter-spacing:0.000px;color:#1b1a19;transform:scaleX(0.8484);transform-origin:0 0;">215.4</div>
<div class="t" style="left:805.70px;top:576.19px;font-size:19.5px;line-height:19.5px;font-family:'Liberation Sans', sans-serif;font-weight:normal;font-style:normal;letter-spacing:-1.253px;color:#323130;">MLPFS</div>
<div class="t" style="left:1077.00px;top:573.45px;font-size:22.5px;line-height:22.5px;font-family:'Liberation Sans', sans-serif;font-weight:bold;font-style:normal;letter-spacing:0.000px;color:#1b1a19;transform:scaleX(0.7853);transform-origin:0 0;">LUMEL PFS</div>
<div class="t" style="left:1297.40px;top:573.45px;font-size:22.5px;line-height:22.5px;font-family:'Liberation Sans', sans-serif;font-weight:bold;font-style:normal;letter-spacing:0.000px;color:#1b1a19;transform:scaleX(0.8000);transform-origin:0 0;">LUMELRIVER</div>
<div class="t" style="left:80.50px;top:607.09px;font-size:19.5px;line-height:19.5px;font-family:'Liberation Sans', sans-serif;font-weight:normal;font-style:normal;letter-spacing:0.572px;color:#323130;">Mineral Water</div>
<div class="t" style="left:314.70px;top:606.93px;font-size:21.5px;line-height:21.5px;font-family:'Liberation Mono', monospace;font-weight:normal;font-style:normal;letter-spacing:0.000px;color:#323130;transform:scaleX(0.8681);transform-origin:0 0;">166.1</div>
<div class="t" style="left:453.50px;top:606.93px;font-size:21.5px;line-height:21.5px;font-family:'Liberation Mono', monospace;font-weight:normal;font-style:normal;letter-spacing:0.000px;color:#323130;transform:scaleX(0.8681);transform-origin:0 0;">204.1</div>
<div class="t" style="left:593.80px;top:606.93px;font-size:21.5px;line-height:21.5px;font-family:'Liberation Mono', monospace;font-weight:normal;font-style:normal;letter-spacing:0.000px;color:#323130;transform:scaleX(0.8681);transform-origin:0 0;">220.7</div>
<div class="t" style="left:732.60px;top:606.93px;font-size:21.5px;line-height:21.5px;font-family:'Liberation Mono', monospace;font-weight:normal;font-style:normal;letter-spacing:0.000px;color:#323130;transform:scaleX(0.8681);transform-origin:0 0;">179.6</div>
<div class="t" style="left:805.70px;top:607.09px;font-size:19.5px;line-height:19.5px;font-family:'Liberation Sans', sans-serif;font-weight:normal;font-style:normal;letter-spacing:-0.399px;color:#323130;">MLPcc</div>
<div class="t" style="left:1077.60px;top:607.09px;font-size:19.5px;line-height:19.5px;font-family:'Liberation Sans', sans-serif;font-weight:normal;font-style:normal;letter-spacing:-0.378px;color:#323130;">LUMEL Pcc</div>
<div class="t" style="left:1297.10px;top:607.09px;font-size:19.5px;line-height:19.5px;font-family:'Liberation Sans', sans-serif;font-weight:normal;font-style:normal;letter-spacing:-0.813px;color:#323130;">LUMELRIVER</div>
<div class="t" style="left:80.50px;top:638.09px;font-size:19.5px;line-height:19.5px;font-family:'Liberation Sans', sans-serif;font-weight:normal;font-style:normal;letter-spacing:0.286px;color:#323130;">Sparkling Water</div>
<div class="t" style="left:325.90px;top:637.93px;font-size:21.5px;line-height:21.5px;font-family:'Liberation Mono', monospace;font-weight:normal;font-style:normal;letter-spacing:0.000px;color:#323130;transform:scaleX(0.8681);transform-origin:0 0;">34.9</div>
<div class="t" style="left:464.70px;top:637.93px;font-size:21.5px;line-height:21.5px;font-family:'Liberation Mono', monospace;font-weight:normal;font-style:normal;letter-spacing:0.000px;color:#323130;transform:scaleX(0.8681);transform-origin:0 0;">30.3</div>
<div class="t" style="left:605.00px;top:637.93px;font-size:21.5px;line-height:21.5px;font-family:'Liberation Mono', monospace;font-weight:normal;font-style:normal;letter-spacing:0.000px;color:#323130;transform:scaleX(0.8681);transform-origin:0 0;">27.9</div>
<div class="t" style="left:743.80px;top:637.93px;font-size:21.5px;line-height:21.5px;font-family:'Liberation Mono', monospace;font-weight:normal;font-style:normal;letter-spacing:0.000px;color:#323130;transform:scaleX(0.8681);transform-origin:0 0;">35.8</div>
<div class="t" style="left:805.70px;top:638.09px;font-size:19.5px;line-height:19.5px;font-family:'Liberation Sans', sans-serif;font-weight:normal;font-style:normal;letter-spacing:-0.522px;color:#323130;">MLBTC</div>
<div class="t" style="left:1071.70px;top:638.09px;font-size:19.5px;line-height:19.5px;font-family:'Liberation Sans', sans-serif;font-weight:normal;font-style:normal;letter-spacing:-0.452px;color:#323130;">LUMEL BTC</div>
<div class="t" style="left:1297.10px;top:638.09px;font-size:19.5px;line-height:19.5px;font-family:'Liberation Sans', sans-serif;font-weight:normal;font-style:normal;letter-spacing:-0.813px;color:#323130;">LUMELRIVER</div>
<svg class="b" style="left:0;top:0" width="1440" height="680" viewBox="0 0 1440 680" fill="none"><path d="M804 366.5 H812 M804 371 H820.5 M804 375 H820.5" stroke="#555" stroke-width="1.2"/></svg>
<div class="t" style="left:972.00px;top:362.11px;font-size:17px;line-height:17px;font-family:'Liberation Sans', sans-serif;font-weight:normal;font-style:italic;letter-spacing:1.777px;color:#777;font-family:'Liberation Serif',serif;">fx</div>
<div class="t" style="left:1191.50px;top:362.11px;font-size:17px;line-height:17px;font-family:'Liberation Sans', sans-serif;font-weight:normal;font-style:italic;letter-spacing:1.777px;color:#777;font-family:'Liberation Serif',serif;">fx</div>
<div class="b" style="left:9px;top:1196px;width:1524px;height:1px;background:#d6d6d6;"></div>
<div class="b" style="left:15px;top:1144px;width:24px;height:34px;background:#f3f3f3;box-shadow:0 1px 3px rgba(0,0,0,0.25);"></div>
<svg class="b" style="left:0;top:1100px" width="1540" height="153" viewBox="0 1100 1540 153" fill="none"><rect x="22.6" y="1152.3" width="2.4" height="2.4" fill="#222"/><rect x="22.6" y="1158.3" width="2.4" height="2.4" fill="#222"/><rect x="22.6" y="1164.3" width="2.4" height="2.4" fill="#222"/><rect x="29.400000000000002" y="1152.3" width="2.4" height="2.4" fill="#222"/><rect x="29.400000000000002" y="1158.3" width="2.4" height="2.4" fill="#222"/><rect x="29.400000000000002" y="1164.3" width="2.4" height="2.4" fill="#222"/><polygon points="986.60,1206.00 989.33,1206.27 990.62,1210.30 992.43,1211.27 996.50,1210.10 998.24,1212.22 996.30,1215.98 996.90,1217.95 1000.60,1220.00 1000.33,1222.73 996.30,1224.02 995.33,1225.83 996.50,1229.90 994.38,1231.64 990.62,1229.70 988.65,1230.30 986.60,1234.00 983.87,1233.73 982.58,1229.70 980.77,1228.73 976.70,1229.90 974.96,1227.78 976.90,1224.02 976.30,1222.05 972.60,1220.00 972.87,1217.27 976.90,1215.98 977.87,1214.17 976.70,1210.10 978.82,1208.36 982.58,1210.30 984.55,1209.70" stroke="#444" stroke-width="1.5" fill="none" stroke-linejoin="round"/><circle cx="986.6" cy="1220" r="5.8" stroke="#2a6bc0" stroke-width="1.8"/><path d="M1019.8 1221.8 H1037.9" stroke="#333" stroke-width="2"/><path d="M1157.4 1221.8 H1176.4 M1166.9 1212.5 V1231.2" stroke="#333" stroke-width="2"/><path d="M1329.5 1210.5 V1230 M1345 1211.5 L1336 1220.5 L1345 1229.5" stroke="#9a9a9a" stroke-width="2.2"/><path d="M1367.5 1211.5 L1358.5 1220.5 L1367.5 1229.5" stroke="#9a9a9a" stroke-width="2.2"/><path d="M1491 1211.5 L1500 1220.5 L1491 1229.5" stroke="#9a9a9a" stroke-width="2.2"/><path d="M1513 1211.5 L1522 1220.5 L1513 1229.5 M1529 1210.5 V1230" stroke="#9a9a9a" stroke-width="2.2"/></svg>
<div class="b" style="left:1052px;top:1206px;width:96px;height:35px;border:1px solid #bdbdbd;background:#fff;"></div>
<div class="t" style="left:1074.90px;top:1215.74px;font-size:19px;line-height:19px;font-family:'Liberation Mono', monospace;font-weight:normal;font-style:normal;letter-spacing:-0.602px;color:#323130;">100</div>
<div class="t" style="left:1111.60px;top:1213.37px;font-size:20px;line-height:20px;font-family:'Liberation Sans', sans-serif;font-weight:normal;font-style:normal;letter-spacing:0.000px;color:#323130;">%</div>
<div class="t" style="left:1225.50px;top:1209.77px;font-size:20px;line-height:20px;font-family:'Liberation Sans', sans-serif;font-weight:normal;font-style:normal;letter-spacing:-0.184px;color:#323130;">8 records</div>
<div class="t" style="left:1378.00px;top:1209.77px;font-size:20px;line-height:20px;font-family:'Liberation Sans', sans-serif;font-weight:normal;font-style:normal;letter-spacing:-0.071px;color:#323130;">Page 1 of 1</div>
<div class="b" style="left:1533px;top:8px;width:512px;height:1235px;background:#fff;box-shadow:-4px 0 5px -2px rgba(0,0,0,0.16);"></div>
<div class="b" style="left:1533px;top:104px;width:512px;height:1027px;background:#f4f4f4;"></div>
<div class="b" style="left:1533px;top:1242px;width:512px;height:1px;background:#ececec;"></div>
<div class="t" style="left:1615.70px;top:48.26px;font-size:33px;line-height:33px;font-family:'Liberation Sans', sans-serif;font-weight:normal;font-style:normal;letter-spacing:-0.056px;color:#323130;">Formula Measure</div>
<div class="t" style="left:1561.50px;top:139.59px;font-size:19.5px;line-height:19.5px;font-family:'Liberation Sans', sans-serif;font-weight:bold;font-style:normal;letter-spacing:0.092px;color:#323130;">Title</div>
<div class="t" style="left:1609.00px;top:139.59px;font-size:19.5px;line-height:19.5px;font-family:'Liberation Sans', sans-serif;font-weight:bold;font-style:normal;letter-spacing:0.000px;color:#a4262c;">*</div>
<div class="b" style="left:1561px;top:167px;width:456px;height:56px;background:#fff;border:1px solid #e1e1e1;"></div>
<div class="t" style="left:1584.40px;top:186.27px;font-size:20px;line-height:20px;font-family:'Liberation Sans', sans-serif;font-weight:normal;font-style:normal;letter-spacing:0.124px;color:#323130;">New Column</div>
<div class="t" style="left:1562.20px;top:257.61px;font-size:19px;line-height:19px;font-family:'Liberation Sans', sans-serif;font-weight:bold;font-style:normal;letter-spacing:-0.444px;color:#323130;">Insert as</div>
<div class="t" style="left:1643.40px;top:257.19px;font-size:19.5px;line-height:19.5px;font-family:'Liberation Sans', sans-serif;font-weight:bold;font-style:normal;letter-spacing:0.000px;color:#a4262c;">*</div>
<div class="b" style="left:1561px;top:293px;width:171px;height:144px;background:#fff;"></div>
<div class="b" style="left:1745px;top:293px;width:167px;height:145px;background:#fff;border:2px solid #5b9bd8;"></div>
<div class="t" style="left:1621.50px;top:366.07px;font-size:20px;line-height:20px;font-family:'Liberation Sans', sans-serif;font-weight:normal;font-style:normal;letter-spacing:-0.423px;color:#323130;">Visual</div>
<div class="t" style="left:1609.70px;top:396.57px;font-size:20px;line-height:20px;font-family:'Liberation Sans', sans-serif;font-weight:normal;font-style:normal;letter-spacing:-0.419px;color:#323130;">Measure</div>
<div class="t" style="left:1803.40px;top:366.07px;font-size:20px;line-height:20px;font-family:'Liberation Sans', sans-serif;font-weight:normal;font-style:normal;letter-spacing:-0.503px;color:#323130;">Visual</div>
<div class="t" style="left:1794.40px;top:396.57px;font-size:20px;line-height:20px;font-family:'Liberation Sans', sans-serif;font-weight:normal;font-style:normal;letter-spacing:0.136px;color:#323130;">Column</div>
<div class="t" style="left:1562.10px;top:473.01px;font-size:19px;line-height:19px;font-family:'Liberation Sans', sans-serif;font-weight:bold;font-style:normal;letter-spacing:-0.175px;color:#323130;">Formula</div>
<div class="t" style="left:1642.90px;top:472.59px;font-size:19.5px;line-height:19.5px;font-family:'Liberation Sans', sans-serif;font-weight:bold;font-style:normal;letter-spacing:0.000px;color:#a4262c;">*</div>
<div class="b" style="left:1561px;top:510px;width:456px;height:175px;background:#fff;border:1px solid #e1e1e1;"></div>
<div class="t" style="left:1570.60px;top:525.07px;font-size:20px;line-height:20px;font-family:'Liberation Sans', sans-serif;font-weight:normal;font-style:normal;letter-spacing:-1.929px;color:#2b79c2;">REPLACE</div>
<div class="t" style="left:1653.00px;top:525.07px;font-size:20px;line-height:20px;font-family:'Liberation Sans', sans-serif;font-weight:normal;font-style:normal;letter-spacing:0.000px;color:#333;">(</div>
<div class="t" style="left:1667.00px;top:525.07px;font-size:20px;line-height:20px;font-family:'Liberation Sans', sans-serif;font-weight:normal;font-style:normal;letter-spacing:0.142px;color:#2b79c2;">[Quarter Item &gt; ENTITY]</div>
<div class="t" style="left:1894.50px;top:525.07px;font-size:20px;line-height:20px;font-family:'Liberation Sans', sans-serif;font-weight:normal;font-style:normal;letter-spacing:0.000px;color:#333;">,</div>
<div class="t" style="left:1904.20px;top:525.07px;font-size:20px;line-height:20px;font-family:'Liberation Sans', sans-serif;font-weight:normal;font-style:normal;letter-spacing:0.000px;color:#3c9a4e;">1</div>
<div class="t" style="left:1918.80px;top:525.07px;font-size:20px;line-height:20px;font-family:'Liberation Sans', sans-serif;font-weight:normal;font-style:normal;letter-spacing:0.000px;color:#333;">,</div>
<div class="t" style="left:1926.50px;top:525.07px;font-size:20px;line-height:20px;font-family:'Liberation Sans', sans-serif;font-weight:normal;font-style:normal;letter-spacing:0.000px;color:#3c9a4e;">2</div>
<div class="t" style="left:1941.80px;top:525.07px;font-size:20px;line-height:20px;font-family:'Liberation Sans', sans-serif;font-weight:normal;font-style:normal;letter-spacing:0.000px;color:#333;">,</div>
<div class="t" style="left:1570.10px;top:560.27px;font-size:20px;line-height:20px;font-family:'Liberation Sans', sans-serif;font-weight:normal;font-style:normal;letter-spacing:-0.649px;color:#962626;">'LUMEL '</div>
<div class="t" style="left:1645.50px;top:560.27px;font-size:20px;line-height:20px;font-family:'Liberation Sans', sans-serif;font-weight:normal;font-style:normal;letter-spacing:0.000px;color:#333;">)</div>
<div class="t" style="left:1589.30px;top:691.26px;font-size:18px;line-height:18px;font-family:'Liberation Sans', sans-serif;font-weight:bold;font-style:normal;letter-spacing:-0.557px;color:#484644;">Example</div>
<div class="t" style="left:1665.00px;top:691.26px;font-size:18px;line-height:18px;font-family:'Liberation Sans', sans-serif;font-weight:normal;font-style:normal;letter-spacing:0.000px;color:#484644;">:</div>
<div class="t" style="left:1676.70px;top:691.26px;font-size:18px;line-height:18px;font-family:'Liberation Sans', sans-serif;font-weight:normal;font-style:italic;letter-spacing:0.468px;color:#605e5c;">[Plan] + [Q1 &gt; Plan]</div>
<div class="t" style="left:1589.30px;top:720.66px;font-size:18px;line-height:18px;font-family:'Liberation Sans', sans-serif;font-weight:normal;font-style:normal;letter-spacing:-1.305px;color:#605e5c;">Use</div>
<div class="t" style="left:1624.30px;top:720.66px;font-size:18px;line-height:18px;font-family:'Liberation Sans', sans-serif;font-weight:bold;font-style:normal;letter-spacing:-0.568px;color:#484644;">Ctrl + Space</div>
<div class="t" style="left:1727.70px;top:720.66px;font-size:18px;line-height:18px;font-family:'Liberation Sans', sans-serif;font-weight:normal;font-style:normal;letter-spacing:0.197px;color:#605e5c;">to open suggestion, also select any</div>
<div class="t" style="left:1589.30px;top:749.26px;font-size:18px;line-height:18px;font-family:'Liberation Sans', sans-serif;font-weight:normal;font-style:normal;letter-spacing:0.429px;color:#605e5c;">column or cell to insert the reference</div>
<div class="t" style="left:1561.50px;top:807.31px;font-size:19px;line-height:19px;font-family:'Liberation Sans', sans-serif;font-weight:bold;font-style:normal;letter-spacing:-0.014px;color:#323130;">Row aggregation type</div>
<div class="t" style="left:1766.50px;top:806.89px;font-size:19.5px;line-height:19.5px;font-family:'Liberation Sans', sans-serif;font-weight:bold;font-style:normal;letter-spacing:0.000px;color:#a4262c;">*</div>
<div class="b" style="left:1561px;top:841px;width:456px;height:55px;background:#fff;border:1px solid #e1e1e1;"></div>
<div class="t" style="left:1580.40px;top:860.47px;font-size:20px;line-height:20px;font-family:'Liberation Sans', sans-serif;font-weight:normal;font-style:normal;letter-spacing:-0.013px;color:#323130;">Formula (Sum)</div>
<div class="t" style="left:1561.50px;top:931.91px;font-size:19px;line-height:19px;font-family:'Liberation Sans', sans-serif;font-weight:bold;font-style:normal;letter-spacing:-0.142px;color:#323130;">Description</div>
<div class="b" style="left:1561px;top:966px;width:456px;height:63px;background:#fff;border:1px solid #e1e1e1;"></div>
<div class="t" style="left:1572.00px;top:979.17px;font-size:22px;line-height:22px;font-family:'Liberation Sans', sans-serif;font-weight:normal;font-style:normal;letter-spacing:0.198px;color:#a19f9d;">Briefly describe the formula</div>
<div class="b" style="left:1728px;top:1155px;width:139px;height:63px;background:#f3f2f1;"></div>
<div class="t" style="left:1764.60px;top:1178.37px;font-size:20px;line-height:20px;font-family:'Liberation Sans', sans-serif;font-weight:bold;font-style:normal;letter-spacing:0.102px;color:#323130;">Cancel</div>
<div class="b" style="left:1881px;top:1155px;width:139px;height:63px;background:#0b73d1;"></div>
<div class="t" style="left:1915.60px;top:1178.37px;font-size:20px;line-height:20px;font-family:'Liberation Sans', sans-serif;font-weight:bold;font-style:normal;letter-spacing:0.563px;color:#ffffff;">Update</div>
<svg class="b" style="left:1500px;top:0" width="559" height="1253" viewBox="1500 0 559 1253" fill="none"><path d="M1576.8 55.3 L1566 65.5 L1576.8 75.6" stroke="#333" stroke-width="1.3"/><circle cx="1894" cy="61.6" r="9.2" stroke="#333" stroke-width="1.4"/><path d="M1894 59.5 V67" stroke="#333" stroke-width="1.8"/><circle cx="1894" cy="56.3" r="1.1" fill="#333"/><path d="M2006.8 60 L2027 79.8 M2027 60 L2006.8 79.8" stroke="#333" stroke-width="2"/><path d="M1939.7 8.5 H1962.6 L1953.8 18.5 V27.6 H1948.8 V18.5 Z" stroke="#666" stroke-width="1.3" stroke-linejoin="miter"/><path d="M1991.7 10.7 H1982.3 V27.3 H2002 V20.7 M1982.3 21.3 H1991.4 V27.3 M1994.5 18.2 L2002 10.7 M1995.8 10.7 H2002 V16.9" stroke="#666" stroke-width="1.3"/><circle cx="2024.3" cy="16.9" r="2.1" fill="#666"/><circle cx="2033.3" cy="16.9" r="2.1" fill="#666"/><circle cx="2042.2" cy="16.9" r="2.1" fill="#666"/><circle cx="1588.6" cy="367.2" r="9.3" stroke="#6b6b6b" stroke-width="1.8" fill="#fff"/><circle cx="1772.8" cy="367.2" r="10" stroke="#6b6b6b" stroke-width="1.9" fill="#fff"/><circle cx="1772.8" cy="367.2" r="6.4" fill="#6b6b6b"/><rect x="1615.3" y="327.4" width="62.9" height="26.7" stroke="#333" stroke-width="1.3" fill="#fff"/><rect x="1630" y="334.4" width="7.2" height="19.7" fill="#78b0e8" stroke="#1f5aa6" stroke-width="1.3"/><rect x="1651.2" y="334.4" width="7.2" height="19.7" fill="#78b0e8" stroke="#1f5aa6" stroke-width="1.3"/><rect x="1671" y="334.4" width="7.2" height="19.7" fill="#78b0e8" stroke="#1f5aa6" stroke-width="1.3"/><path d="M1615.3 334.4 H1678.2 M1637.2 327.4 V354.1 M1658.9 327.4 V354.1 M1622.7 334.4 V354.1 M1644.4 334.4 V354.1 M1664.2 334.4 V354.1" stroke="#333" stroke-width="1.3"/><path d="M1633.3 323 V312.9 H1674.7 V323 M1653.2 312.9 V323" stroke="#1f5aa6" stroke-width="1.5"/><path d="M1630.1 320.5 L1633.3 324 L1636.5 320.5" stroke="#1f5aa6" stroke-width="1.6"/><path d="M1650.0 320.5 L1653.2 324 L1656.4 320.5" stroke="#1f5aa6" stroke-width="1.6"/><path d="M1671.5 320.5 L1674.7 324 L1677.9 320.5" stroke="#1f5aa6" stroke-width="1.6"/><rect x="1799.5" y="328" width="60.8" height="26.1" stroke="#333" stroke-width="1.3" fill="#fff"/><path d="M1799.5 335.3 H1851 M1816.6 328 V354.1 M1833.9 328 V354.1 M1808 335.3 V354.1 M1825.4 335.3 V354.1 M1842.7 335.3 V354.1" stroke="#333" stroke-width="1.3"/><rect x="1851" y="328" width="9.3" height="26.1" fill="#78b0e8" stroke="#1f5aa6" stroke-width="1.3"/><path d="M1856.2 315.1 V325 M1853 321.8 L1856.2 325.2 L1859.4 321.8" stroke="#1f5aa6" stroke-width="1.5"/><path d="M1983.8 489.5 L2002 471.3 M1994 471.3 H2002 V479.3 M1983.8 481.5 V489.5 H1991.8" stroke="#444" stroke-width="1.4"/><path d="M1567.5 706.5 V701.5 C1561 697 1563 689.8 1570.6 689.8 C1578.2 689.8 1580.2 697 1573.7 701.5 V706.5 Z M1567.5 709.5 H1573.7" stroke="#555" stroke-width="1.3" stroke-linejoin="round"/><path d="M1977 862.3 L1987.5 873.6 L1998 862.3" stroke="#333" stroke-width="1.6"/><path d="M2003 1025 L2012.5 1015.5 M2007.5 1025 L2012.5 1020" stroke="#444" stroke-width="1.2"/></svg>
</body></html>
